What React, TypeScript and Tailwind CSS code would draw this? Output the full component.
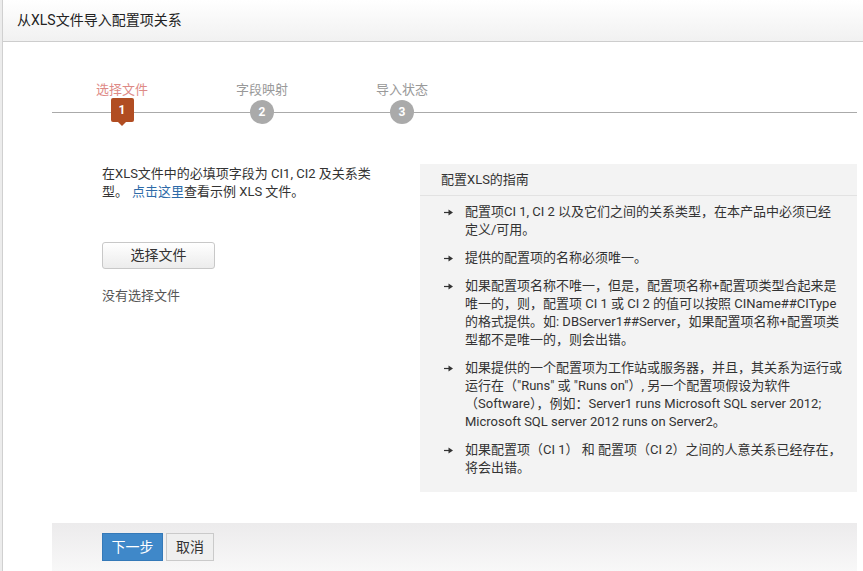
import React from "react";

type Step = { label: string; n: number; active?: boolean };

const steps: Step[] = [
  { label: "选择文件", n: 1, active: true },
  { label: "字段映射", n: 2 },
  { label: "导入状态", n: 3 },
];

const guide: React.ReactNode[] = [
  "配置项CI 1, CI 2 以及它们之间的关系类型，在本产品中必须已经定义/可用。",
  "提供的配置项的名称必须唯一。",
  "如果配置项名称不唯一，但是，配置项名称+配置项类型合起来是唯一的，则，配置项 CI 1 或 CI 2 的值可以按照 CIName##CIType 的格式提供。如: DBServer1##Server，如果配置项名称+配置项类型都不是唯一的，则会出错。",
  "如果提供的一个配置项为工作站或服务器，并且，其关系为运行或运行在（\"Runs\" 或 \"Runs on\"）, 另一个配置项假设为软件（Software），例如：Server1 runs Microsoft SQL server 2012; Microsoft SQL server 2012 runs on Server2。",
  "如果配置项（CI 1） 和 配置项（CI 2）之间的人意关系已经存在，将会出错。",
];

const Arrow = () => (
  <svg width="9" height="7" viewBox="0 0 9 7" className="shrink-0 mt-[6px]">
    <path d="M0 3.5H5.5" stroke="#333" strokeWidth="1.2" />
    <path d="M4.5 0.5L9 3.5L4.5 6.5Z" fill="#333" />
  </svg>
);

const StepItem = ({ step }: { step: Step }) => (
  <div className="w-[140px] flex flex-col items-center">
    <div
      className={
        step.active
          ? "h-[17px] leading-[17px] text-[13px] text-[#de8a86]"
          : "h-[17px] leading-[17px] text-[13px] text-[#999]"
      }
    >
      {step.label}
    </div>
    <div className="h-[28px] flex items-center justify-center relative z-10">
      {step.active ? (
        <div className="flex flex-col items-center self-start">
          <div className="w-[23px] h-[24px] rounded-[2px] bg-[#b14d22] text-white text-[12px] font-bold flex items-center justify-center">
            {step.n}
          </div>
          <div className="w-0 h-0 border-l-[4px] border-r-[4px] border-t-[4px] border-l-transparent border-r-transparent border-t-[#b14d22]" />
        </div>
      ) : (
        <div className="w-[24px] h-[24px] rounded-full bg-[#aaa] text-white text-[12px] font-bold flex items-center justify-center">
          {step.n}
        </div>
      )}
    </div>
  </div>
);

export default function App() {
  return (
    <div className="w-full h-[571px] overflow-hidden bg-white border-l-2 border-[#ececec] font-['Roboto','Noto_Sans_CJK_SC',sans-serif] text-[#333]">
      <div className="h-full border-l border-[#d0d0d0]">
        <div className="h-[42px] pl-[14px] flex items-center border-b border-[#cdcdcd] bg-gradient-to-b from-white to-[#f1f1f1]">
          <span className="text-[14px] text-[#222]">从XLS文件导入配置项关系</span>
        </div>

        <div className="ml-[49px] mr-[6px]">
          <div className="relative pt-[39px] flex">
            <div className="absolute left-0 right-0 top-[70px] h-px bg-[#aaa]" />
            {steps.map((s) => (
              <StepItem key={s.n} step={s} />
            ))}
          </div>

          <div className="mt-[38px] flex pl-[50px]">
            <div className="w-[276px] pt-[1px]">
              <p className="text-[13px] leading-[18px]">
                在XLS文件中的必填项字段为 CI1, CI2 及关系类型。
                <span className="ml-[4px] text-[#2d6aa8]">点击这里</span>查看示例 XLS 文件。
              </p>
              <button className="mt-[41px] w-[113px] h-[27px] rounded-[3px] border border-[#c8c8c8] bg-gradient-to-b from-white to-[#ececec] text-[14px] text-[#333]">
                选择文件
              </button>
              <div className="mt-[18px] text-[13px] leading-[18px] text-[#555]">
                没有选择文件
              </div>
            </div>

            <div className="ml-auto w-[437px] bg-[#f3f3f3]">
              <div className="h-[32px] pl-[21px] flex items-center border-b border-[#e2e2e2] text-[13px]">
                配置XLS的指南
              </div>
              <ul className="pt-[7px] pb-[15px] pl-[24px] pr-[15px] flex flex-col gap-[10px]">
                {guide.map((g, i) => (
                  <li key={i} className="flex text-[13px] leading-[18px]">
                    <Arrow />
                    <span className="ml-[12px]">{g}</span>
                  </li>
                ))}
              </ul>
            </div>
          </div>

          <div className="mt-[31px] h-[60px] pl-[50px] pt-[10px] flex items-start gap-[3px] bg-gradient-to-b from-[#ecebec] to-[#fbfbfb]">
            <button className="w-[61px] h-[28px] bg-[#3f88c9] border border-[#3479b8] text-white text-[14px]">
              下一步
            </button>
            <button className="w-[48px] h-[28px] bg-[#efefef] border border-[#cacaca] text-[#333] text-[14px]">
              取消
            </button>
          </div>
        </div>
      </div>
    </div>
  );
}
